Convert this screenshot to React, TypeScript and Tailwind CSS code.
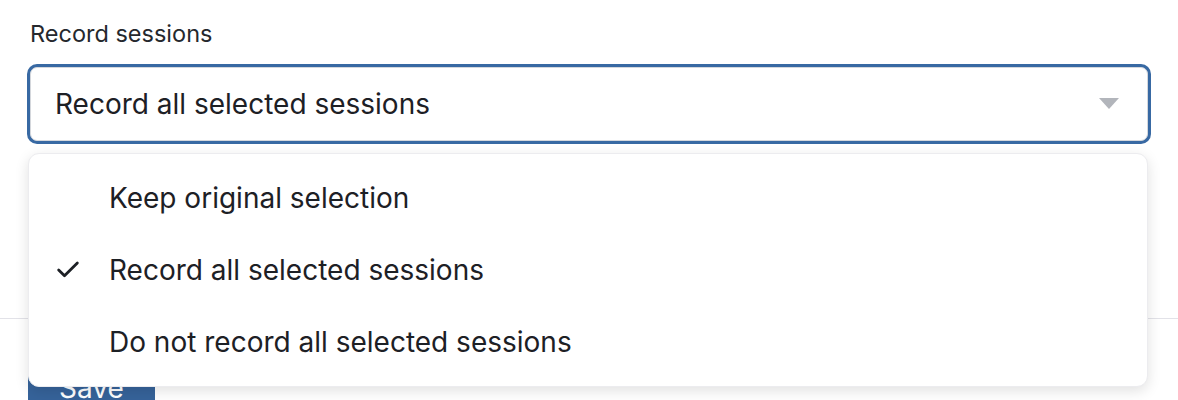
import { Check } from "lucide-react";

const options = [
  "Keep original selection",
  "Record all selected sessions",
  "Do not record all selected sessions",
];

export default function App() {
  const selected = 1;

  return (
    <div className="relative h-[400px] w-[1178px] overflow-hidden bg-white font-['Inter',sans-serif] text-[#1d2025]">
      <div className="px-[30px] pt-[19px]">
        <label className="block text-[23.5px] leading-[30px] text-[#25282d]">Record sessions</label>
        <div className="mt-[18px] flex h-[74px] items-center justify-between rounded-[7px] border border-[#d4d7dc] bg-white pl-[24px] pr-[28px] ring-[3px] ring-[#3869a3]">
          <span className="text-[28px]">Record all selected sessions</span>
          <svg width="20" height="12" viewBox="0 0 20 12" className="text-[#b2b5bb]">
            <path d="M0 0 H20 L10 11 Z" fill="currentColor" />
          </svg>
        </div>
      </div>

      {/* page content behind the menu */}
      <div className="mt-[177px] border-t border-[#e2e2e8]" />
      <div className="ml-[28px] mt-[43px] flex h-[52px] w-[127px] items-center justify-center bg-[#36639a] text-[28px] text-white">
        Save
      </div>

      <ul className="absolute left-[28px] top-[153px] w-[1120px] rounded-[11px] border border-[#ececef] bg-white py-[8px] shadow-[0_4px_14px_rgba(0,0,0,0.12)]">
        {options.map((o, i) => (
          <li key={o} className="flex h-[72px] items-center text-[28px]">
            <span className="flex w-[80px] justify-center">
              {i === selected && <Check size={28} strokeWidth={2.4} className="ml-[-3px]" />}
            </span>
            <span>{o}</span>
          </li>
        ))}
      </ul>
    </div>
  );
}
